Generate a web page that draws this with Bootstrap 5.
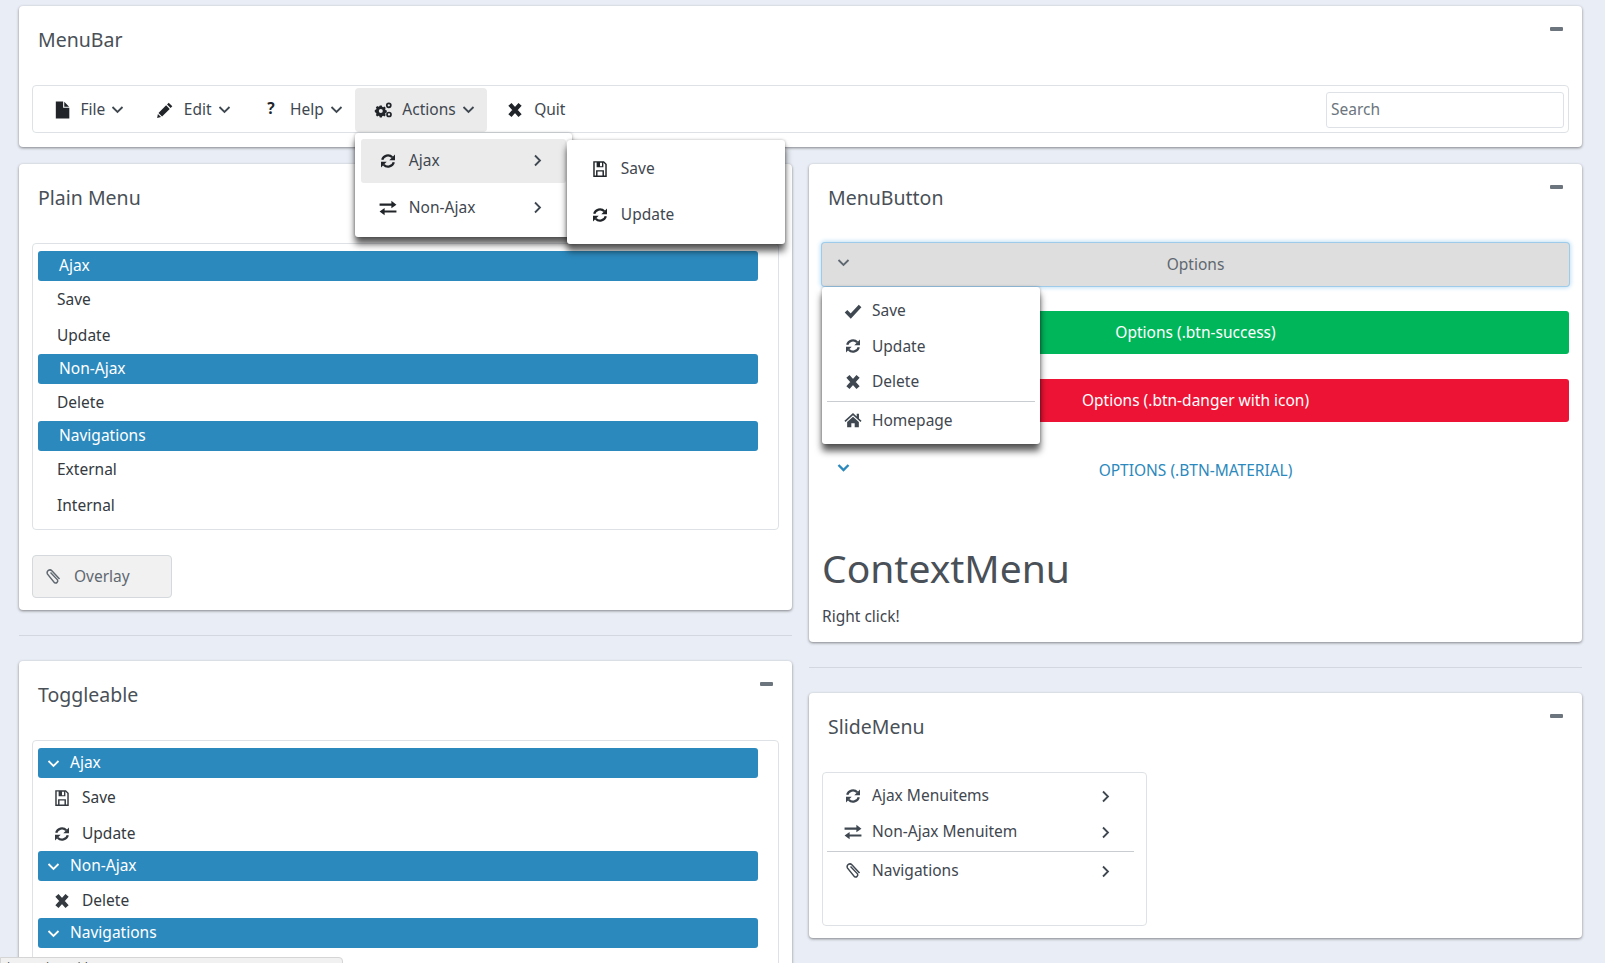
<!DOCTYPE html>
<html lang="en">
<head>
    <meta charset="UTF-8">
    <meta name="viewport" content="width=device-width, initial-scale=1.0">
    <title>Menu showcase</title>
    <link href="https://cdn.jsdelivr.net/npm/bootstrap@5.3.0/dist/css/bootstrap.min.css" rel="stylesheet">
    <style>
        html, body { height: 963px; overflow: hidden; }
        body { background: #e9edf5; font-family: "Noto Sans", sans-serif; font-size: 15.5px; color: #3f4750; }
        .page-wrap { padding: 6px 23px 0 19px; }
        .page-grid { --bs-gutter-x: 17px; --bs-gutter-y: 0; }
        .panel { border: 0; border-radius: 4px; box-shadow: 0 1px 3px rgba(0,0,0,.45); margin-bottom: 17px; }
        .panel .card-body { padding: 14px 13px 14px; }
        .panel-title { font-size: 19.5px; line-height: 39px; height: 39px; margin: 0 0 26px 6px; color: #495057; font-weight: 400; }
        .panel-min { position: absolute; top: 21px; right: 19px; width: 13px; height: 4px; border-radius: 1px; background: #6c757d; }
        .panel-rule { margin: 25px 0; border: 0; border-top: 1px solid #d3d7df; opacity: 1; }

        .ico { width: 18px; height: 18px; flex: none; fill: currentColor; display: block; }
        .chev { width: 13px; height: 13px; flex: none; fill: none; stroke: currentColor; stroke-width: 1.8; display: block; }

        .bar-box { border: 1px solid #dee2e6; border-radius: 4px; height: 48px; padding: 1px 0 0; background: #fff; flex-wrap: nowrap; justify-content: flex-start; }
        .bar-item { display: flex; align-items: center; height: 44px; padding: 0 12px 0 19.5px; border-radius: 4px; gap: 6px; position: relative; }
        .bar-item .ico { margin-right: 4px; color: #212529; }
        .bar-item.is-open { background: #ebebeb; }
        .bar-search { width: 238px; height: 36px; margin-left: auto; margin-right: 4px; font-family: inherit; font-size: 15.5px; padding: 0 4px 2px; border-radius: 3px; }
        .bar-search::placeholder { color: #6c757d; }

        .fly { border: 0; border-radius: 3px; padding: 6px; min-width: 0; margin: 0; box-shadow: 0 7px 7px rgba(0,0,0,.65), 0 0 3px rgba(0,0,0,.3); color: #3f4750; font-size: 15.5px; }
        .fly-main { top: 45px; left: 0; width: 217px; }
        .fly-sub { top: 7px; left: 212px; width: 218px; }
        .fly-row { display: flex; align-items: center; height: 46px; padding: 0 22px 0 18px; gap: 8px; }
        .fly-row.is-hover { background: #ebebeb; border-radius: 3px; height: 44px; margin-bottom: 2px; }
        .fly-row .chev { margin-left: auto; }

        .tree-box { border: 1px solid #dee2e6; border-radius: 4px; padding: 6px 20px 6px 5px; background: #fff; }
        .tree-head { display: flex; align-items: center; height: 30px; margin-top: 1px; padding-left: 21px; background: #2b89bd; color: #fff; border-radius: 3px; }
        .tree-head.has-chev { padding-left: 9px; gap: 10px; }
        .tree-item { display: flex; align-items: center; height: 36px; padding: 2px 0 0 19px; color: #343a40; }
        .tree-item.has-ico { padding: 3px 0 0 15px; gap: 11px; }
        .tree-box.is-tall { padding-bottom: 80px; }

        .overlay-btn { display: flex; align-items: center; gap: 12px; width: 140px; height: 43px; margin-top: 25px; padding: 0 11px; border: 1px solid #d5d8dc; background: #f1f1f1; color: #5f6870; font-size: 15.5px; border-radius: 4px; margin-bottom: -2px; }

        .opt-btn { position: relative; display: block; width: 100%; height: 43px; padding: 0; margin-bottom: 25px; border: 0; border-radius: 3px; font-size: 15.5px; text-align: center; }
        .opt-btn .chev { position: absolute; left: 15px; top: 13px; }
        .opt-plain { background: #dedede; color: #5f6870; box-shadow: 0 0 0 1px #9ecbea, 0 0 4px 2px #c3e1f6; }
        .opt-green { background: #00b65b; color: #fff; }
        .opt-red { background: #ed1334; color: #fff; }
        .opt-flat { background: transparent; color: #2b89bd; text-transform: uppercase; margin-bottom: 0; padding-top: 4px; }
        .opt-flat .chev { stroke-width: 2.4; top: 14px; }
        .menu-pop { top: 123px; left: 13px; width: 218px; padding: 6px 5px; border: 0; border-radius: 3px; margin: 0; min-width: 0; box-shadow: 0 7px 7px rgba(0,0,0,.65), 0 0 3px rgba(0,0,0,.3); color: #3f4750; font-size: 15.5px; }
        .side-row { display: flex; align-items: center; height: 35.5px; padding: 0 11px 0 17px; gap: 10px; }
        .side-row .chev { margin-left: auto; }
        .side-sep { margin: 1px 0 1px; border: 0; border-top: 1px solid #c9ccd1; opacity: 1; }

        .ctx-title { font-size: 39px; line-height: 50px; margin: 53px 0 11px; font-weight: 400; color: #495057; }
        .ctx-note { margin: 0; line-height: 24px; }
        .stack-body { position: relative; }

        .panel .slide-body { padding-bottom: 12px; }
        .slide-box { width: 325px; height: 154px; border: 1px solid #dee2e6; border-radius: 4px; padding: 5px 12px 0 4px; color: #3f4750; }
        .slide-box .side-row { height: 36px; padding-right: 22px; }
        .slide-box .side-sep { margin: 1px 0; }

        .status-tip { position: fixed; left: 0; top: 957px; width: 343px; height: 20px; background: #f1f1f1; border: 1px solid #d5d5d5; border-radius: 0 4px 0 0; font-size: 12px; padding: 1px 0 0 6px; color: #444; z-index: 2000; }
    </style>
</head>

<body>
    <svg width="0" height="0" class="d-none">
        <symbol id="i-file" viewBox="0 0 16 16"><path d="M2.5 .5H9v5.500h5.500V15.500H2.500zM10 .7 14.300 5H10z"/></symbol>
        <symbol id="i-pencil" viewBox="0 0 16 16"><path d="M11.300 1.500 14.500 4.700 13 6.200 9.800 3zM9 3.800 12.200 7 5.400 13.800 2.200 10.600zM1.700 11.500 4.500 14.300 1 15z"/></symbol>
        <symbol id="i-gears" viewBox="-1 0 18 16"><path fill-rule="evenodd" d="M4.800 3.500h2l.4 1.300 1 .4 1.200-.7 1.400 1.400-.7 1.200.4 1 1.300.4v2l-1.300.4-.4 1 .7 1.200-1.400 1.400-1.200-.7-1 .4-.4 1.300h-2l-.4-1.300-1-.4-1.200.7-1.400-1.400.7-1.200-.4-1L-.2 10V8l1.300-.4.4-1-.7-1.200 1.400-1.400 1.200.7 1-.4zM5.800 7a2 2 0 1 0 0 4 2 2 0 0 0 0-4z"/><circle cx="13.800" cy="3.300" r="2" fill="none" stroke="currentColor" stroke-width="1.700"/><circle cx="14" cy="12.500" r="2" fill="none" stroke="currentColor" stroke-width="1.700"/></symbol>
        <symbol id="i-close" viewBox="0 0 16 16"><path d="M3.500 3 12.500 13M12.500 3 3.500 13" stroke="currentColor" stroke-width="3.800" fill="none"/></symbol>
        <symbol id="i-refresh" viewBox="-1 -1 18 18"><path d="M2.200 6.800A6 6 0 0 1 12.300 4.300M13.800 9.200A6 6 0 0 1 3.700 11.700" fill="none" stroke="currentColor" stroke-width="2.300"/><path d="M15 1.500V7.200H9.300zM1 14.500V8.800H6.700z"/></symbol>
        <symbol id="i-exchange" viewBox="0 0 16 16"><path d="M.5 4h10.500V1.500L15.500 5 11 8.200V6H.5zM15.500 10.200H5V8L.5 11.200 5 14.500V12h10.500z"/></symbol>
        <symbol id="i-save" viewBox="0 0 16 16"><path fill-rule="evenodd" d="M2 1h9.500L14 3.500V15H2zM3.300 2.300v11.400h1.200V9h7v4.700h1.200V4L11 2.300V6.500H5V2.300zM5.800 10.300v3.400h4.400v-3.400zM8 2.500v3h1.800v-3z"/></symbol>
        <symbol id="i-check" viewBox="0 0 16 16"><path d="M1.800 8.200 6 12.500 14.300 3.500" fill="none" stroke="currentColor" stroke-width="3.200"/></symbol>
        <symbol id="i-home" viewBox="0 0 16 16"><path d="M8 1.800 11.300 4.800V2.500h2v4.100L15.600 8.700 14.700 9.700 8 3.800 1.300 9.700.4 8.700zM8 5.200 13.200 9.800V14.500H9.500V10.800h-3v3.700H2.800V9.800z"/></symbol>
        <symbol id="i-clip" viewBox="0 0 16 16"><path d="M13.800 9.800 7 2.400A2.500 2.500 0 0 0 3 5.200L9.300 13A1.900 1.900 0 0 0 12 10.500L5.800 3.900" fill="none" stroke="currentColor" stroke-width="1.300"/></symbol>
        <symbol id="i-down" viewBox="0 0 13 13"><path d="M1.500 4 6.500 9 11.500 4"/></symbol>
        <symbol id="i-right" viewBox="0 0 13 13"><path d="M4 1.500 9 6.500 4 11.500"/></symbol>
    </svg>

    <div class="page-wrap">
        <!-- MenuBar -->
        <div class="card panel">
            <div class="card-body">
                <span class="panel-min"></span>
                <h5 class="panel-title">MenuBar</h5>
                <div class="navbar bar-box">
                    <div class="bar-item"><svg class="ico"><use href="#i-file"/></svg>File<svg class="chev"><use href="#i-down"/></svg></div>
                    <div class="bar-item"><svg class="ico"><use href="#i-pencil"/></svg>Edit<svg class="chev"><use href="#i-down"/></svg></div>
                    <div class="bar-item"><span class="ico fw-bold text-center lh-1">?</span>Help<svg class="chev"><use href="#i-down"/></svg></div>
                    <div class="bar-item is-open"><svg class="ico"><use href="#i-gears"/></svg>Actions<svg class="chev"><use href="#i-down"/></svg>
                        <div class="dropdown-menu show fly fly-main">
                            <div class="fly-row is-hover"><svg class="ico"><use href="#i-refresh"/></svg>Ajax<svg class="chev"><use href="#i-right"/></svg></div>
                            <div class="fly-row"><svg class="ico"><use href="#i-exchange"/></svg>Non-Ajax<svg class="chev"><use href="#i-right"/></svg></div>
                            <div class="dropdown-menu show fly fly-sub">
                                <div class="fly-row"><svg class="ico"><use href="#i-save"/></svg>Save</div>
                                <div class="fly-row"><svg class="ico"><use href="#i-refresh"/></svg>Update</div>
                            </div>
                        </div>
                    </div>
                    <div class="bar-item"><svg class="ico"><use href="#i-close"/></svg>Quit</div>
                    <input type="text" class="form-control bar-search" placeholder="Search">
                </div>
            </div>
        </div>

        <div class="row page-grid">
            <div class="col-6">
                <!-- Plain Menu -->
                <div class="card panel mb-0">
                    <div class="card-body">
                        <span class="panel-min"></span>
                        <h5 class="panel-title">Plain Menu</h5>
                        <div class="tree-box">
                            <div class="tree-head">Ajax</div>
                            <div class="tree-item">Save</div>
                            <div class="tree-item">Update</div>
                            <div class="tree-head">Non-Ajax</div>
                            <div class="tree-item">Delete</div>
                            <div class="tree-head">Navigations</div>
                            <div class="tree-item">External</div>
                            <div class="tree-item">Internal</div>
                        </div>
                        <button type="button" class="overlay-btn"><svg class="ico"><use href="#i-clip"/></svg>Overlay</button>
                    </div>
                </div>
                <hr class="panel-rule">
                <!-- Toggleable -->
                <div class="card panel">
                    <div class="card-body">
                        <span class="panel-min"></span>
                        <h5 class="panel-title">Toggleable</h5>
                        <div class="tree-box is-tall">
                            <div class="tree-head has-chev"><svg class="chev"><use href="#i-down"/></svg>Ajax</div>
                            <div class="tree-item has-ico"><svg class="ico"><use href="#i-save"/></svg>Save</div>
                            <div class="tree-item has-ico"><svg class="ico"><use href="#i-refresh"/></svg>Update</div>
                            <div class="tree-head has-chev"><svg class="chev"><use href="#i-down"/></svg>Non-Ajax</div>
                            <div class="tree-item has-ico"><svg class="ico"><use href="#i-close"/></svg>Delete</div>
                            <div class="tree-head has-chev"><svg class="chev"><use href="#i-down"/></svg>Navigations</div>
                        </div>
                    </div>
                </div>
            </div>

            <div class="col-6">
                <!-- MenuButton + ContextMenu -->
                <div class="card panel mb-0">
                    <div class="card-body stack-body">
                        <span class="panel-min"></span>
                        <h5 class="panel-title">MenuButton</h5>
                        <button type="button" class="opt-btn opt-plain"><svg class="chev"><use href="#i-down"/></svg>Options</button>
                        <button type="button" class="opt-btn opt-green">Options (.btn-success)</button>
                        <button type="button" class="opt-btn opt-red">Options (.btn-danger with icon)</button>
                        <button type="button" class="opt-btn opt-flat"><svg class="chev"><use href="#i-down"/></svg>Options (.btn-material)</button>
                        <div class="dropdown-menu show menu-pop" id="optionsMenu">
                            <div class="side-row"><svg class="ico"><use href="#i-check"/></svg>Save</div>
                            <div class="side-row"><svg class="ico"><use href="#i-refresh"/></svg>Update</div>
                            <div class="side-row"><svg class="ico"><use href="#i-close"/></svg>Delete</div>
                            <hr class="side-sep">
                            <div class="side-row"><svg class="ico"><use href="#i-home"/></svg>Homepage</div>
                        </div>
                        <h1 class="ctx-title">ContextMenu</h1>
                        <p class="ctx-note">Right click!</p>
                    </div>
                </div>
                <hr class="panel-rule">
                <!-- SlideMenu -->
                <div class="card panel">
                    <div class="card-body slide-body">
                        <span class="panel-min"></span>
                        <h5 class="panel-title">SlideMenu</h5>
                        <div class="slide-box">
                            <div class="side-row"><svg class="ico"><use href="#i-refresh"/></svg>Ajax Menuitems<svg class="chev"><use href="#i-right"/></svg></div>
                            <div class="side-row"><svg class="ico"><use href="#i-exchange"/></svg>Non-Ajax Menuitem<svg class="chev"><use href="#i-right"/></svg></div>
                            <hr class="side-sep">
                            <div class="side-row"><svg class="ico"><use href="#i-clip"/></svg>Navigations<svg class="chev"><use href="#i-right"/></svg></div>
                        </div>
                    </div>
                </div>
            </div>
        </div>
    </div>

    <div class="status-tip">javascript:void(0)</div>

    <script src="https://cdn.jsdelivr.net/npm/bootstrap@5.3.0/dist/js/bootstrap.bundle.min.js"></script>
</body>
</html>
